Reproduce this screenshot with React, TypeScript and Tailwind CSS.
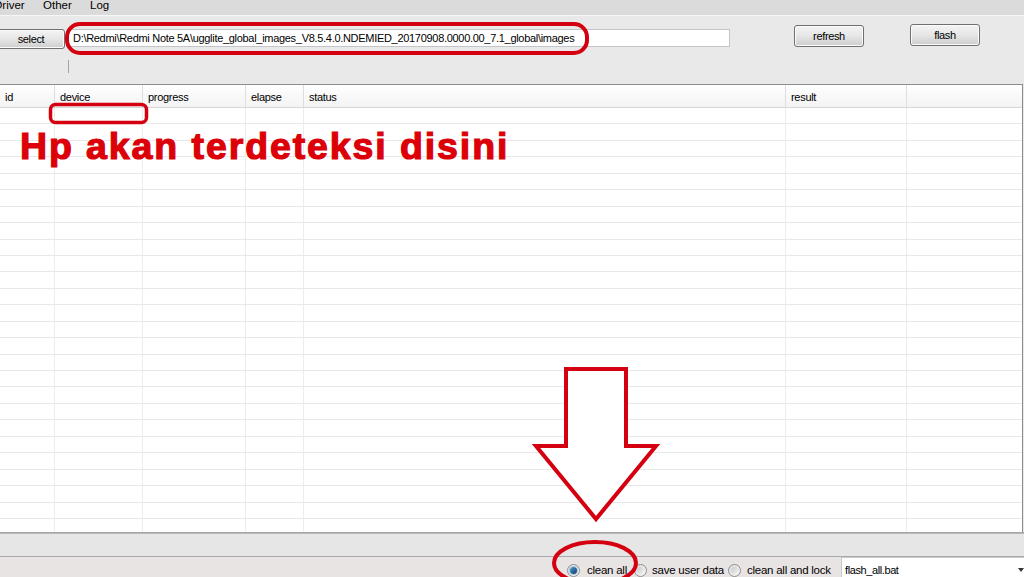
import React from "react";

const cols = [55, 88, 103, 58, 482, 121, 115];
const heads = ["id", "device", "progress", "elapse", "status", "result", ""];

function WinButton({ label, className }: { label: string; className: string }) {
  return (
    <div
      className={
        "flex items-center justify-center rounded-[3px] border border-[#707070] bg-gradient-to-b from-[#f4f4f4] via-[#e6e6e6] to-[#cdcdcd] shadow-[inset_0_0_0_1px_#fbfbfb] text-[11px] tracking-[-0.35px] text-black " +
        className
      }
    >
      {label}
    </div>
  );
}

function Radio({ checked }: { checked?: boolean }) {
  return (
    <div className="flex h-[13px] w-[13px] shrink-0 items-center justify-center rounded-full border border-[#8e8f8f] bg-gradient-to-br from-[#dcdcdc] to-[#f6f6f6]">
      <div
        className={
          checked
            ? "h-[7px] w-[7px] rounded-full bg-gradient-to-br from-[#4aa0d8] to-[#12386b] shadow-[0_0_0_1px_#a9c7e0]"
            : "h-[7px] w-[7px] rounded-full bg-gradient-to-br from-[#c8c8c8] to-[#f2f2f2]"
        }
      />
    </div>
  );
}

export default function App() {
  const rows = Array.from({ length: 26 });
  return (
    <div className="relative flex h-[577px] w-[1024px] flex-col overflow-hidden bg-[#e9e9e9] font-['Liberation_Sans',Arial,sans-serif] text-black">
      {/* menu bar */}
      <div className="flex h-[15px] shrink-0 items-start bg-[#dbdbdb] text-[11.5px] leading-[12px]">
        <div className="ml-[-6px] mt-[-1px] w-[49px]">Driver</div>
        <div className="mt-[-1px] w-[47px]">Other</div>
        <div className="mt-[-1px]">Log</div>
      </div>
      <div className="h-px shrink-0 bg-[#f6f6f6]" />

      {/* toolbar */}
      <div className="flex h-[68px] shrink-0 flex-col bg-[#e9e9e9] pt-[8px]">
        <div className="flex h-[33px] items-start">
          <WinButton label="select" className="ml-[-3px] mt-[5px] h-[20px] w-[68px]" />
          <div className="ml-[3px] mt-[5px] flex h-[18px] w-[662px] items-center overflow-hidden whitespace-nowrap border border-[#c3c5c9] bg-white pl-[4px] text-[11px] tracking-[-0.3px]">
            D:\Redmi\Redmi Note 5A\ugglite_global_images_V8.5.4.0.NDEMIED_20170908.0000.00_7.1_global\images
          </div>
          <WinButton label="refresh" className="ml-[64px] mt-[1px] h-[22px] w-[70px]" />
          <WinButton label="flash" className="ml-[46px] mt-0 h-[22px] w-[70px]" />
        </div>
        <div className="ml-[68px] mt-[3px] h-[13px] w-px bg-[#a3a3a3]" />
      </div>

      {/* table */}
      <div className="flex w-[1023px] shrink-0 flex-col border-r border-t border-[#8c8c8c] bg-white">
        <div className="flex h-[23px] border-b border-[#d6d6d6] bg-gradient-to-b from-white to-[#f3f3f3] text-[11px] tracking-[-0.3px]">
          {cols.map((w, i) => (
            <div
              key={i}
              style={{ width: w }}
              className={
                "flex shrink-0 items-center pl-[5px] pt-[2px] " +
                (i < cols.length - 1 ? "border-r border-[#dedede]" : "")
              }
            >
              {heads[i]}
            </div>
          ))}
        </div>
        <div className="h-[424px] overflow-hidden">
          {rows.map((_, r) => (
            <div key={r} className="flex h-[16.45px] border-b border-[#e8e8e8]">
              {cols.map((w, i) => (
                <div
                  key={i}
                  style={{ width: w }}
                  className={"shrink-0 " + (i < cols.length - 1 ? "border-r border-[#ececec]" : "")}
                />
              ))}
            </div>
          ))}
        </div>
      </div>
      <div className="h-[2px] shrink-0 bg-gradient-to-b from-[#9a9a9a] to-[#c4c4c4]" />

      {/* lower gray area */}
      <div className="h-[22px] shrink-0 bg-[#e6e6e6]" />
      <div className="h-px shrink-0 bg-[#a9a9a9]" />

      {/* status bar */}
      <div className="flex h-[20px] shrink-0 items-stretch bg-[#e9e4e4] text-[11.5px] tracking-[-0.25px] leading-[14px]">
        <div className="ml-[567px] flex w-[67px] items-center gap-[7px] pt-[6px]">
          <Radio checked />
          <span>clean all</span>
        </div>
        <div className="flex w-[94px] items-center gap-[5px] pt-[6px]">
          <Radio />
          <span>save user data</span>
        </div>
        <div className="flex w-[113px] items-center gap-[6px] pt-[6px]">
          <Radio />
          <span>clean all and lock</span>
        </div>
        <div className="flex flex-1 items-center justify-between border-l border-t border-[#c9c9c9] bg-white pl-[3px] pr-[1px] pt-[5px] text-[11px] tracking-[-0.4px]">
          <span>flash_all.bat</span>
          <svg width="6" height="4" viewBox="0 0 6 4" className="mr-[-1px]">
            <path d="M0 0 L6 0 L3 4 Z" fill="#333" />
          </svg>
        </div>
      </div>

      {/* annotations */}
      <div className="pointer-events-none absolute left-[20px] top-[128px] whitespace-nowrap text-[37.5px] font-bold leading-[36px] tracking-[1.9px] text-[#dc0008] [-webkit-text-stroke:1.2px_#dc0008]">
        Hp akan terdeteksi disini
      </div>
      <svg
        className="pointer-events-none absolute left-0 top-0"
        width="1024"
        height="577"
        viewBox="0 0 1024 577"
      >
        <rect x="67" y="24" width="520" height="29" rx="13" fill="none" stroke="#d4000f" strokeWidth="4" />
        <rect x="50.5" y="104.5" width="96" height="18" rx="5" fill="none" stroke="#d4000f" strokeWidth="3.5" />
        <polygon
          points="566,369 626,369 626,446 656,446 596,519 536,446 566,446"
          fill="white"
          stroke="#d4000f"
          strokeWidth="4"
          strokeLinejoin="miter"
        />
        <ellipse cx="595" cy="563" rx="41" ry="21" fill="none" stroke="#d4000f" strokeWidth="4" />
      </svg>
    </div>
  );
}
